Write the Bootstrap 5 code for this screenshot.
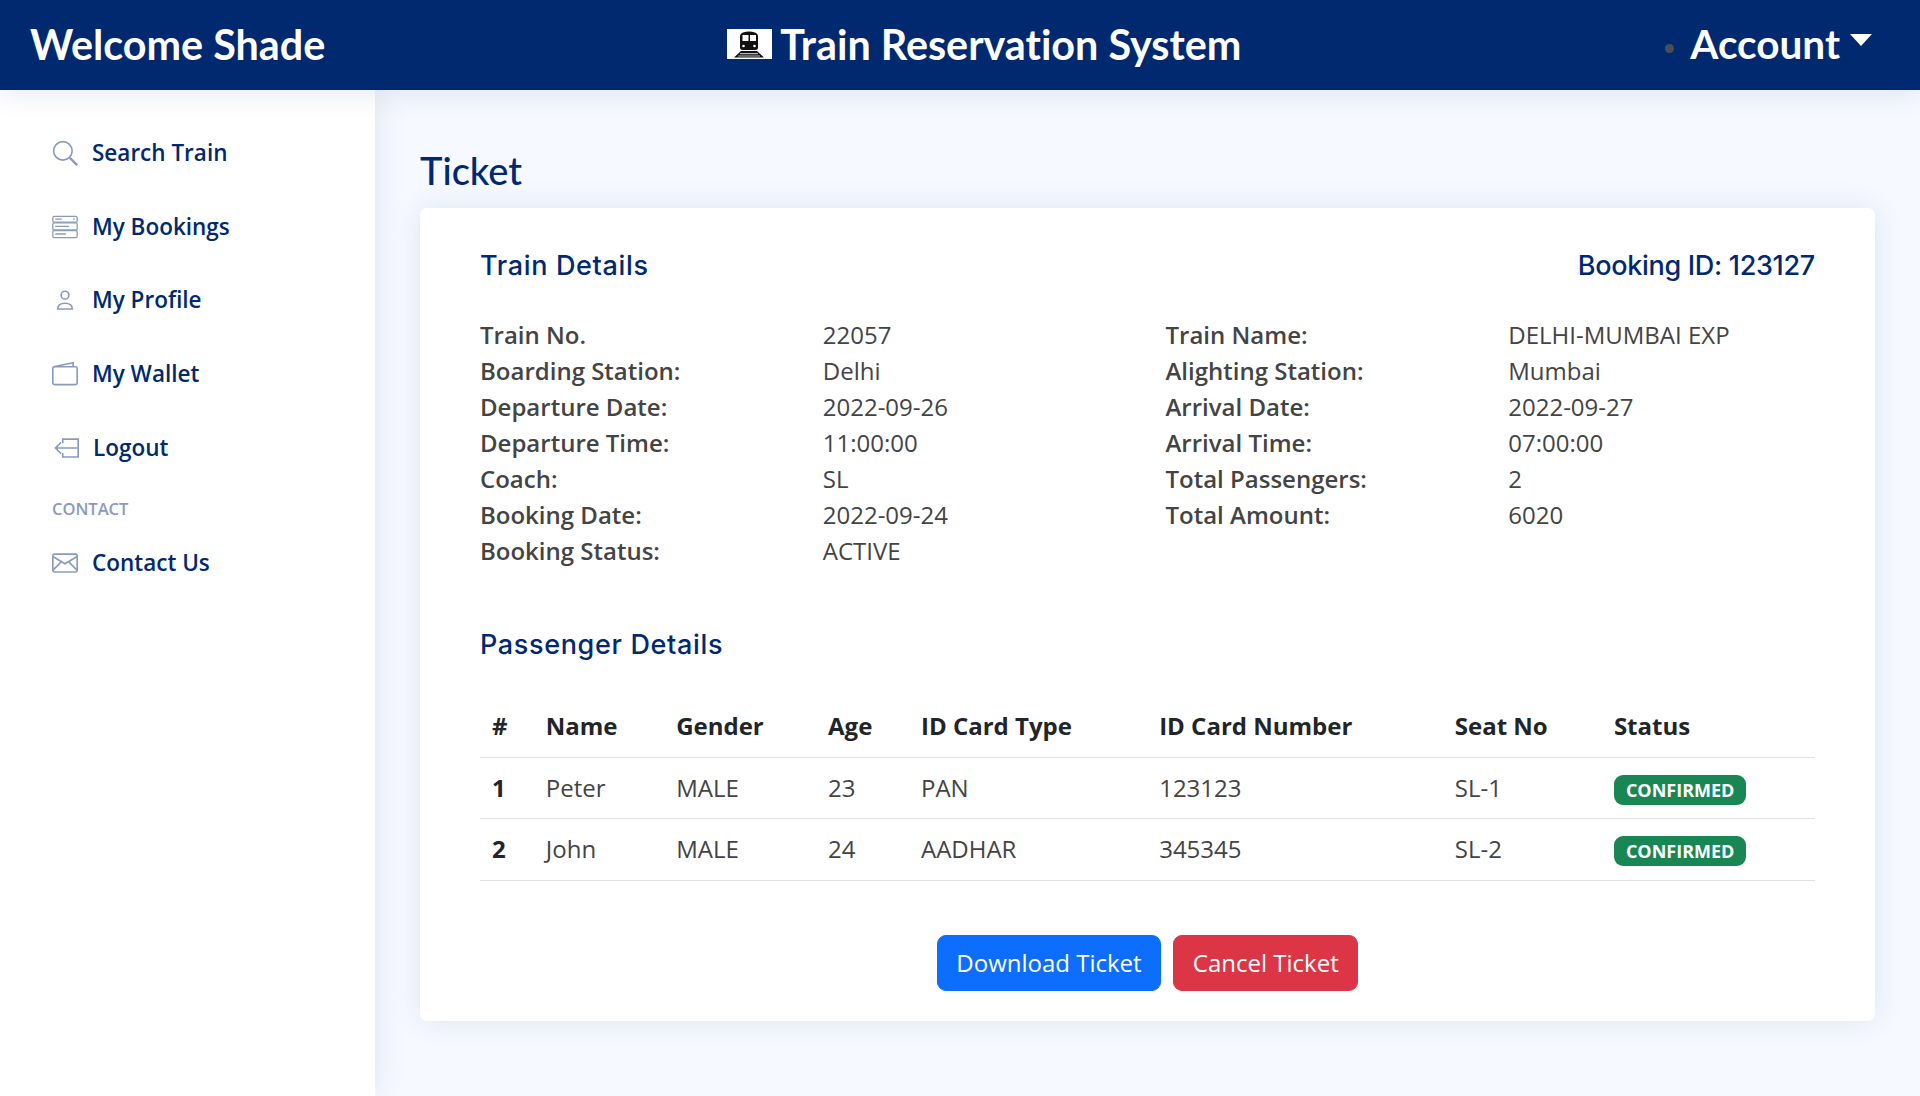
<!DOCTYPE html>
<html lang="en">
<head>
  <meta charset="UTF-8" />
  <meta name="viewport" content="width=device-width, initial-scale=1" />
  <title>Ticket</title>
  <link href="https://cdn.jsdelivr.net/npm/bootstrap@5.3.3/dist/css/bootstrap.min.css" rel="stylesheet" />
  <style>
    html { font-size: 24px; }
    body { font-family: "Open Sans", sans-serif; background: #f6f9ff; color: #444; height: 1096px; overflow: hidden; }
    .top-head { height: 90px; background: #012970; padding: 0 48px 1px 30px; box-shadow: 0 3px 30px rgba(1, 41, 112, .1); position: relative; z-index: 2; }
    .head-title { font-family: Lato, sans-serif; font-weight: 700; font-size: 41.3px; color: #fff; line-height: 1; font-variant-ligatures: none; }
    .head-mid { gap: 8px; margin-right: 22px; }
    .head-acc { gap: 10px; }
    .head-acc .head-title { font-size: 40.5px; }
    .head-dot { width: 9px; height: 9px; border-radius: 50%; background: #4b4f55; margin: 7px 6px 0 0; }
    .head-caret { width: 0; height: 0; border-left: 11px solid transparent; border-right: 11px solid transparent; border-top: 12px solid #fff; margin-top: -10px; }
    .side-menu { width: 375px; background: #fff; box-shadow: 0 0 30px rgba(1, 41, 112, .1); padding: 26px 0 0 52px; flex-shrink: 0; }
    .side-link { height: 73.7px; color: #012970; text-decoration: none; font-size: 22.5px; font-weight: 600; gap: 14px; }
    .side-link svg { width: 26px; height: 26px; flex-shrink: 0; }
    .side-out { padding-left: 1px; }
    .side-head { font-size: 16.5px; font-weight: 600; color: #899bbd; line-height: 1; margin: 17px 0 8px; }
    .main-area { padding: 58px 45px 0; }
    .page-name { font-family: Lato, sans-serif; font-size: 38px; font-weight: 500; color: #012970; line-height: 1.2; margin-bottom: 14.7px; }
    .ticket-card { background: #fff; border-radius: 7px; padding: 42px 60px 30px; box-shadow: 0 0 30px rgba(1, 41, 112, .1); }
    .sec-title { font-family: Inter, sans-serif; font-size: 27px; font-weight: 500; color: #012970; line-height: 1.2; letter-spacing: .65px; }
    .sec-id { letter-spacing: -.3px; }
    .sec-top { margin-bottom: 34px; }
    .sec-passenger { margin: 60px 0 35px; }
    .info-label { font-weight: 600; color: #444; }
    .ticket-table { color: #212529; margin-bottom: 0; }
    .ticket-table td { color: #444; }
    .ticket-table th, .ticket-table td { border-color: #dee2e6; padding-top: 12.25px; padding-bottom: 12.25px; }
    .status-pill { font-size: 18px; border-radius: 9px; padding: 6px 12px; }
    .ticket-btns { margin-top: 54.5px; }
    .ticket-btns .btn { border-width: 1.5px; padding-left: 18.6px; padding-right: 18.6px; }
  </style>
</head>
<body>
  <header class="top-head d-flex align-items-center justify-content-between">
    <div class="head-title">Welcome Shade</div>
    <div class="head-title head-mid d-flex align-items-center">
      <svg width="45" height="30" viewBox="0 0 45 30">
        <rect width="45" height="30" fill="#fff"/>
        <path d="M16 3.500q6-2 12 0 3 1 3 4v11q0 2.500-3 2.500H16q-3 0-3-2.500v-11q0-3 3-4z" fill="#111"/>
        <rect x="15.500" y="6" width="6" height="6" fill="#fff"/>
        <rect x="23" y="6" width="6" height="6" fill="#fff"/>
        <circle cx="16.500" cy="17" r="1.300" fill="#fff"/>
        <circle cx="27.500" cy="17" r="1.300" fill="#fff"/>
        <path d="M14 22h16l7 6.500H7z" fill="#111"/>
        <path d="M13 24h18v1.300H13zM11 26.500h22v.9H11z" fill="#bbb"/>
      </svg>
      Train Reservation System
    </div>
    <div class="head-acc d-flex align-items-center">
      <span class="head-dot"></span>
      <span class="head-title">Account</span>
      <span class="head-caret"></span>
    </div>
  </header>
  <div class="d-flex" style="height:1006px">
    <nav class="side-menu">
      <a href="#" class="side-link d-flex align-items-center">
        <svg viewBox="0 0 16 16" fill="none" stroke="#899bbd" stroke-width="1"><circle cx="6.700" cy="6.700" r="5.700"/><path d="M11 11l4.500 4.500" stroke-width="1.500"/></svg>Search Train</a>
      <a href="#" class="side-link d-flex align-items-center">
        <svg viewBox="0 0 16 16" fill="none" stroke="#899bbd" stroke-width=".8"><rect x=".5" y="1.500" width="15" height="3.500" rx=".8"/><rect x=".5" y="5.500" width="15" height="4.300" rx=".8"/><rect x=".5" y="10.200" width="15" height="4.300" rx=".8"/><path d="M2 3.200h4M13 3.200h1M2 7.600h8.500M2 12.300h6.500"/></svg>My Bookings</a>
      <a href="#" class="side-link d-flex align-items-center">
        <svg viewBox="0 0 16 16" fill="none" stroke="#899bbd" stroke-width="1"><circle cx="8" cy="5" r="2.400"/><path d="M3.500 13.500c0-2.500 2-3.500 4.500-3.500s4.500 1 4.500 3.500z"/></svg>My Profile</a>
      <a href="#" class="side-link d-flex align-items-center">
        <svg viewBox="0 0 16 16" fill="none" stroke="#899bbd" stroke-width="1"><rect x=".5" y="3.500" width="15" height="11" rx="1"/><path d="M1 3.500L13 1v2.500"/></svg>My Wallet</a>
      <a href="#" class="side-link side-out d-flex align-items-center">
        <svg viewBox="0 0 16 16" fill="none" stroke="#899bbd" stroke-width="1"><path d="M6 5V2.500h9.500v11H6V11"/><path d="M15 8H1.500M5 4.500L1.500 8 5 11.500"/></svg>Logout</a>
      <div class="side-head">CONTACT</div>
      <a href="#" class="side-link d-flex align-items-center">
        <svg viewBox="0 0 16 16" fill="none" stroke="#899bbd" stroke-width="1"><rect x=".5" y="2.500" width="15" height="11" rx="1"/><path d="M.5 4L8 8.500 15.500 4M.5 12.500L6 7M15.500 12.500L10 7"/></svg>Contact Us</a>
    </nav>
    <main class="main-area flex-grow-1">
      <h1 class="page-name">Ticket</h1>
      <div class="ticket-card">
        <div class="sec-top d-flex justify-content-between">
          <div class="sec-title">Train Details</div>
          <div class="sec-title sec-id">Booking ID: 123127</div>
        </div>
        <div class="row">
          <div class="col-3 info-label">Train No.</div><div class="col-3">22057</div>
          <div class="col-3 info-label">Train Name:</div><div class="col-3">DELHI-MUMBAI EXP</div>
          <div class="col-3 info-label">Boarding Station:</div><div class="col-3">Delhi</div>
          <div class="col-3 info-label">Alighting Station:</div><div class="col-3">Mumbai</div>
          <div class="col-3 info-label">Departure Date:</div><div class="col-3">2022-09-26</div>
          <div class="col-3 info-label">Arrival Date:</div><div class="col-3">2022-09-27</div>
          <div class="col-3 info-label">Departure Time:</div><div class="col-3">11:00:00</div>
          <div class="col-3 info-label">Arrival Time:</div><div class="col-3">07:00:00</div>
          <div class="col-3 info-label">Coach:</div><div class="col-3">SL</div>
          <div class="col-3 info-label">Total Passengers:</div><div class="col-3">2</div>
          <div class="col-3 info-label">Booking Date:</div><div class="col-3">2022-09-24</div>
          <div class="col-3 info-label">Total Amount:</div><div class="col-3">6020</div>
          <div class="col-3 info-label">Booking Status:</div><div class="col-3">ACTIVE</div>
        </div>
        <div class="sec-title sec-passenger">Passenger Details</div>
        <table class="table ticket-table">
          <thead>
            <tr><th>#</th><th>Name</th><th>Gender</th><th>Age</th><th>ID Card Type</th><th>ID Card Number</th><th>Seat No</th><th>Status</th></tr>
          </thead>
          <tbody>
            <tr><th>1</th><td>Peter</td><td>MALE</td><td>23</td><td>PAN</td><td>123123</td><td>SL-1</td><td><span class="badge bg-success status-pill">CONFIRMED</span></td></tr>
            <tr><th>2</th><td>John</td><td>MALE</td><td>24</td><td>AADHAR</td><td>345345</td><td>SL-2</td><td><span class="badge bg-success status-pill">CONFIRMED</span></td></tr>
          </tbody>
        </table>
        <div class="ticket-btns d-flex justify-content-center gap-2">
          <button class="btn btn-primary">Download Ticket</button>
          <button class="btn btn-danger">Cancel Ticket</button>
        </div>
      </div>
    </main>
  </div>
</body>
</html>
